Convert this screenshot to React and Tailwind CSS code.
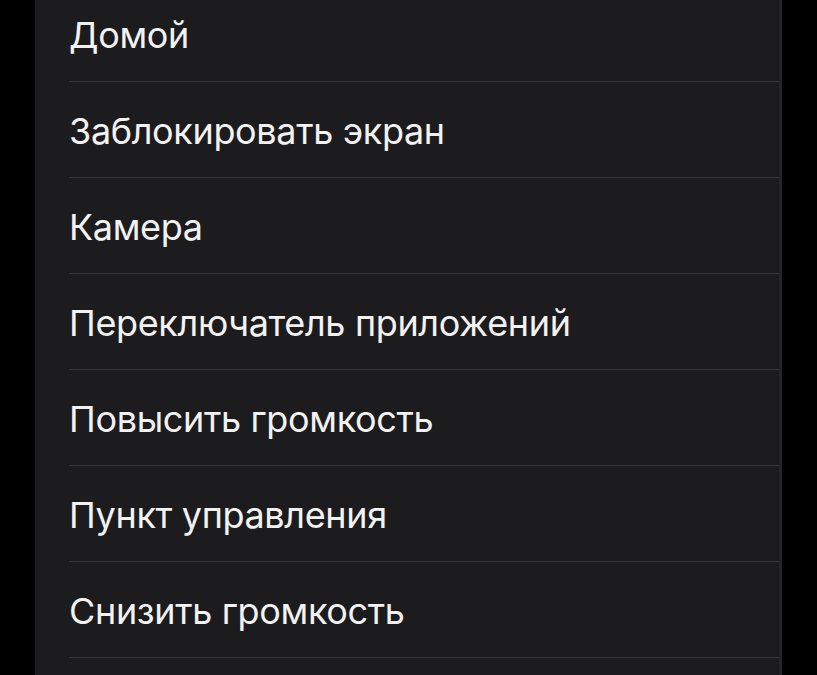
const items = [
  "Домой",
  "Заблокировать экран",
  "Камера",
  "Переключатель приложений",
  "Повысить громкость",
  "Пункт управления",
  "Снизить громкость",
];

export default function App() {
  return (
    <div className="h-[675px] w-[817px] overflow-hidden bg-black font-['Inter','Noto_Sans',sans-serif]">
      <div className="ml-[35px] h-full w-[747px] overflow-hidden border-r-[3px] border-[#252527] bg-[#1c1c1e]">
        <div className="-mt-[14px]">
          {items.map((label) => (
            <div key={label} className="flex h-[96px] flex-col pl-[34px]">
              <div className="flex flex-1 items-center pt-[2px] text-[36px] leading-none tracking-[-0.35px] text-[#f2f2f2]">
                {label}
              </div>
              <div className="h-px bg-[#38383a]" />
            </div>
          ))}
        </div>
      </div>
    </div>
  );
}
